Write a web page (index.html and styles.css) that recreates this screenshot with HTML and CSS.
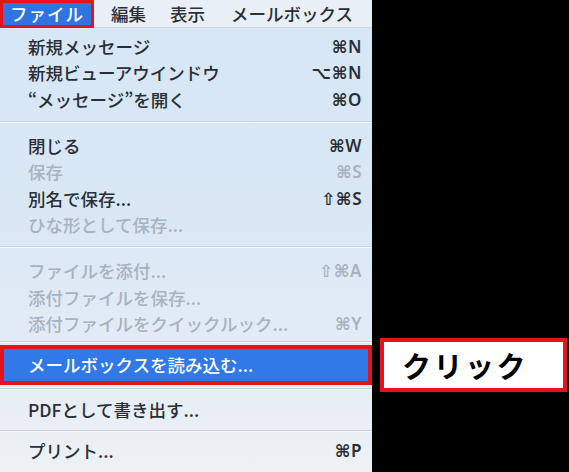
FILE: index.html
```html
<!DOCTYPE html>
<html lang="ja">
<head>
<meta charset="utf-8">
<link rel="stylesheet" href="styles.css">
</head>
<body>
<div class="screen">
  <div class="menu">
    <div class="menubar">
      <span class="mb-item mb-active">ファイル</span>
      <span class="mb-item">編集</span>
      <span class="mb-item">表示</span>
      <span class="mb-item">メールボックス</span>
    </div>
    <div class="items">
      <div class="row"><span>新規メッセージ</span><span class="key">⌘N</span></div>
      <div class="row"><span>新規ビューアウインドウ</span><span class="key">⌥⌘N</span></div>
      <div class="row"><span>“メッセージ”を開く</span><span class="key">⌘O</span></div>
      <div class="sep"></div>
      <div class="row"><span>閉じる</span><span class="key">⌘W</span></div>
      <div class="row dis"><span>保存</span><span class="key">⌘S</span></div>
      <div class="row"><span>別名で保存...</span><span class="key">⇧⌘S</span></div>
      <div class="row dis"><span>ひな形として保存...</span></div>
      <div class="sep"></div>
      <div class="row dis"><span>ファイルを添付...</span><span class="key">⇧⌘A</span></div>
      <div class="row dis"><span>添付ファイルを保存...</span></div>
      <div class="row dis"><span>添付ファイルをクイックルック...</span><span class="key">⌘Y</span></div>
      <div class="sep sep-before-hl"></div>
      <div class="row hl"><span>メールボックスを読み込む...</span></div>
      <div class="sep sep-after-hl"></div>
      <div class="row"><span>PDFとして書き出す...</span></div>
      <div class="sep sep-last"></div>
      <div class="row"><span>プリント...</span><span class="key">⌘P</span></div>
    </div>
  </div>
  <div class="side"></div>
  <div class="callout">クリック</div>
</div>
</body>
</html>
```

FILE: styles.css
```css
html, body {
  margin: 0;
  padding: 0;
  background: #000;
}
.screen {
  position: relative;
  width: 569px;
  height: 472px;
  display: flex;
  overflow: hidden;
  font-family: "Noto Sans CJK JP", "Noto Sans", sans-serif;
}
.menu {
  width: 372px;
  height: 472px;
  display: flex;
  flex-direction: column;
  background: linear-gradient(180deg, #d7e7f7 0%, #d9e7f5 45%, #e2ebf5 70%, #edf1f5 100%);
}
.menubar {
  height: 28px;
  display: flex;
  align-items: center;
  background: #e8eff7;
  border-bottom: 1px solid #cdd9e5;
  box-sizing: border-box;
  font-size: 17.5px;
  color: #2b2f36;
  font-weight: 500;
}
.mb-item {
  line-height: 28px;
}
.mb-item:nth-child(2) { padding-left: 17px; }
.mb-item:nth-child(3) { padding-left: 24px; }
.mb-item:nth-child(4) { padding-left: 26px; }
.mb-active {
  background: #2f74df;
  color: #fff;
  border: 3px solid #e5141a;
  box-sizing: border-box;
  height: 28px;
  line-height: 22px;
  padding: 0 0 0 7px;
  width: 94px;
  letter-spacing: 1px;
}
.items {
  padding-top: 5px;
  display: flex;
  flex-direction: column;
}
.row {
  height: 26.6px;
  display: flex;
  align-items: center;
  justify-content: space-between;
  padding: 0 10px 0 28px;
  font-size: 17.5px;
  font-weight: 500;
  color: #2a2e35;
  white-space: nowrap;
}
.key {
  font-family: "Noto Sans", "DejaVu Sans", sans-serif;
  font-size: 17px;
  font-weight: 600;
  letter-spacing: 0.5px;
}
.dis {
  color: #a8b2be;
}
.sep {
  height: 1px;
  background: #c7d2de;
  border-bottom: 1px solid #f4f8fc;
  margin: 8px 0 9px;
}
.sep-before-hl {
  margin: 4px 0 2px;
}
.sep-after-hl {
  margin: 3px 0 6px;
}
.sep-last {
  margin: 7px 0 6px;
}
.hl {
  height: 40px;
  box-sizing: border-box;
  border: 4px solid #e5141a;
  background: #3079e6;
  color: #fff;
  padding-left: 24px;
  font-weight: 500;
}
.side {
  flex: 1;
  background: #000;
}
.callout {
  position: absolute;
  left: 380px;
  top: 338px;
  width: 187px;
  height: 54px;
  box-sizing: border-box;
  border: 4px solid #e5141a;
  background: #fff;
  color: #000;
  font-size: 29px;
  font-weight: 700;
  letter-spacing: 2.5px;
  display: flex;
  align-items: center;
  padding-left: 18px;
}
```
